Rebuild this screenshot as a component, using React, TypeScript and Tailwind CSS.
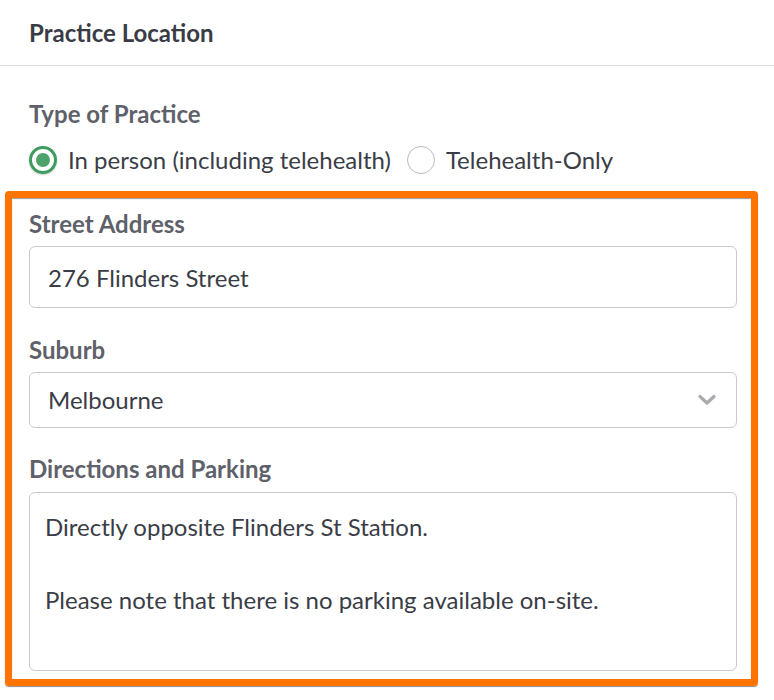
import { useState } from 'react'

const lato = "font-['Lato','Liberation_Sans',sans-serif]"

function Radio({ checked, label, onClick }: { checked: boolean; label: string; onClick: () => void }) {
  return (
    <label className="flex items-center gap-[11px] cursor-pointer" onClick={onClick}>
      {checked ? (
        <span className="w-[28px] h-[28px] rounded-full border-[3px] border-[#3f9b5e] flex items-center justify-center shadow-[0_1px_2px_rgba(0,0,0,0.2)]">
          <span className="w-[14px] h-[14px] rounded-full bg-[#4ba36a]" />
        </span>
      ) : (
        <span className="w-[28px] h-[28px] rounded-full border border-[#b9bbbf] bg-white" />
      )}
      <span className="text-[24px] leading-[28px] text-[#3a3d46]">{label}</span>
    </label>
  )
}

function Chevron() {
  return (
    <svg width="18" height="12" viewBox="0 0 18 12" className="shrink-0">
      <polyline points="2,2.5 9,9 16,2.5" fill="none" stroke="#a9abb0" strokeWidth="3.2" strokeLinecap="round" strokeLinejoin="round" />
    </svg>
  )
}

export default function App() {
  const [type, setType] = useState<'person' | 'tele'>('person')
  const [street, setStreet] = useState('276 Flinders Street')
  const [notes, setNotes] = useState('Directly opposite Flinders St Station.\n\nPlease note that there is no parking available on-site.')

  return (
    <div className={`${lato} w-[774px] h-[700px] bg-white overflow-hidden`}>
      <div className="h-[66px] border-b border-[#dddddd] flex items-center px-[29px]">
        <h1 className="text-[24px] font-bold text-[#3a3c45]">Practice Location</h1>
      </div>

      <div className="px-[29px] mt-[34px]">
        <div className="text-[24px] leading-[28px] font-bold text-[#5e6169]">Type of Practice</div>
        <div className="mt-[18px] flex items-center gap-[16px]">
          <Radio checked={type === 'person'} label="In person (including telehealth)" onClick={() => setType('person')} />
          <Radio checked={type === 'tele'} label="Telehealth-Only" onClick={() => setType('tele')} />
        </div>
      </div>

      {/* highlighted address block */}
      <div className="mt-[17px] ml-[5px] w-[753px] border-[7px] border-[#ff7400] rounded-[4px] pl-[17px] pr-[14px] pt-[12px] pb-[8px] shadow-[0_1px_1px_rgba(0,0,0,0.45),inset_0_1px_1px_rgba(0,0,0,0.4)]">
        <div className="text-[24px] leading-[28px] font-bold text-[#5e6169]">Street Address</div>
        <input
          className="mt-[8px] w-[708px] h-[62px] border border-[#c9cacd] rounded-[6px] pl-[18px] text-[24px] text-[#3a3d46] outline-none"
          value={street}
          onChange={e => setStreet(e.target.value)}
        />

        <div className="mt-[28px] text-[24px] leading-[28px] font-bold text-[#5e6169]">Suburb</div>
        <div className="mt-[8px] w-[708px] h-[56px] border border-[#c9cacd] rounded-[6px] pl-[18px] pr-[20px] flex items-center justify-between">
          <span className="text-[24px] text-[#3a3d46]">Melbourne</span>
          <Chevron />
        </div>

        <div className="mt-[27px] text-[24px] leading-[28px] font-bold text-[#5e6169]">Directions and Parking</div>
        <textarea
          className="mt-[9px] block w-[708px] h-[179px] border border-[#c9cacd] rounded-[6px] px-[15px] pt-[16px] text-[24px] leading-[36.5px] text-[#3a3d46] resize-none outline-none"
          value={notes}
          onChange={e => setNotes(e.target.value)}
        />
      </div>
    </div>
  )
}
